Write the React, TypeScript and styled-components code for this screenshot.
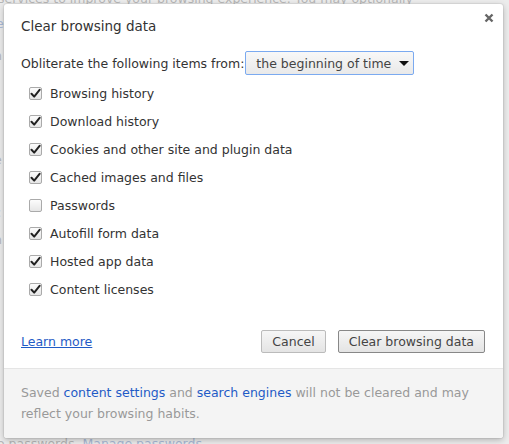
import styled, { createGlobalStyle } from 'styled-components';

const GlobalStyle = createGlobalStyle`
  html, body {
    margin: 0;
    padding: 0;
    width: 509px;
    height: 444px;
    overflow: hidden;
    background: #eaeaea;
    font-family: 'DejaVu Sans', 'Liberation Sans', sans-serif;
  }
`;

const Page = styled.div`
  position: relative;
  width: 509px;
  height: 444px;
  overflow: hidden;
  background: #ececec;
  color: #b5b5b5;
  font-size: 12.5px;
`;

const BackText = styled.div<{ $top: number; $left: number; $link?: boolean }>`
  position: absolute;
  top: ${(p) => p.$top}px;
  left: ${(p) => p.$left}px;
  white-space: nowrap;
  color: ${(p) => (p.$link ? '#a9b9d6' : '#b7b7b7')};
`;

const Dialog = styled.div`
  position: absolute;
  left: 4px;
  top: 4px;
  width: 499px;
  height: 434px;
  background: #fff;
  border-radius: 3px;
  box-shadow: 0 2px 6px rgba(0, 0, 0, 0.25), 0 0 0 1px rgba(0, 0, 0, 0.05);
  display: flex;
  flex-direction: column;
  overflow: hidden;
  color: #333;
`;

const Body = styled.div`
  flex: 1;
  padding: 0 18px 0 17px;
  display: flex;
  flex-direction: column;
`;

const Header = styled.div`
  position: relative;
  height: 42px;
  display: flex;
  align-items: center;
`;

const Title = styled.h1`
  margin: 0;
  font-size: 13.5px;
  font-weight: normal;
  color: #333;
  padding-top: 2px;
`;

const Close = styled.div`
  position: absolute;
  right: -11px;
  top: 7px;
  width: 14px;
  height: 14px;
`;

const FromRow = styled.div`
  display: flex;
  align-items: center;
  gap: 1px;
  font-size: 12.5px;
  height: 24px;
  margin-top: 5px;
  white-space: nowrap;
`;

const Select = styled.div`
  box-sizing: border-box;
  width: 169px;
  height: 24px;
  border: 1px solid #7baaf0;
  border-radius: 2px;
  background: linear-gradient(#f8f8f8, #e9e9e9);
  display: flex;
  align-items: center;
  justify-content: space-between;
  padding: 0 4px 0 10px;
  color: #444;
  font-size: 12.5px;
  white-space: nowrap;
`;

const Arrow = styled.span`
  width: 0;
  height: 0;
  border-left: 5px solid transparent;
  border-right: 5px solid transparent;
  border-top: 5px solid #111;
`;

const List = styled.div`
  display: flex;
  flex-direction: column;
  margin-top: 4px;
  padding-left: 8px;
`;

const Row = styled.label`
  display: flex;
  align-items: center;
  height: 28px;
  gap: 8px;
  font-size: 12.5px;
  color: #333;
`;

const Box = styled.span`
  box-sizing: border-box;
  width: 13px;
  height: 13px;
  border: 1px solid #aaa;
  border-radius: 2px;
  background: linear-gradient(#fcfcfc, #e6e6e6);
  display: flex;
  align-items: center;
  justify-content: center;
`;

const Actions = styled.div`
  display: flex;
  align-items: center;
  margin-top: auto;
  margin-bottom: 15px;
  gap: 12px;
`;

const Link = styled.a`
  color: #1f5bc6;
  font-size: 12.5px;
  text-decoration: underline;
  margin-right: auto;
`;

const Button = styled.button<{ $primary?: boolean }>`
  box-sizing: border-box;
  height: 23px;
  padding: 0 10px;
  border: 1px solid ${(p) => (p.$primary ? '#888' : '#bbb')};
  border-radius: 2px;
  background: linear-gradient(#f6f6f6, #e4e4e4);
  font-family: inherit;
  font-size: 12.5px;
  color: #444;
`;

const Footer = styled.div`
  height: 70px;
  box-sizing: border-box;
  border-top: 1px solid #e5e5e5;
  background: #f4f4f4;
  padding: 13px 17px 0;
  font-size: 12.5px;
  line-height: 21px;
  color: #999;
`;

const FooterLink = styled.a`
  color: #1f5bc6;
  text-decoration: none;
`;

const Check = () => (
  <svg width="11" height="11" viewBox="0 0 11 11">
    <path d="M1.5 5.8 L4.2 8.6 L9.6 1.8" fill="none" stroke="#222" strokeWidth="2" strokeLinecap="round" strokeLinejoin="round" />
  </svg>
);

const items = [
  { label: 'Browsing history', checked: true },
  { label: 'Download history', checked: true },
  { label: 'Cookies and other site and plugin data', checked: true },
  { label: 'Cached images and files', checked: true },
  { label: 'Passwords', checked: false },
  { label: 'Autofill form data', checked: true },
  { label: 'Hosted app data', checked: true },
  { label: 'Content licenses', checked: true },
];

export default function App() {
  return (
    <Page>
      <GlobalStyle />
      <BackText $top={-9} $left={-2}>services to improve your browsing experience. You may optionally</BackText>
      <BackText $top={16} $left={-4} $link>e</BackText>
      <BackText $top={48} $left={-6}>n</BackText>
      <BackText $top={152} $left={-6}>e</BackText>
      <BackText $top={205} $left={-6}>c</BackText>
      <BackText $top={232} $left={-6}>n</BackText>
      <BackText $top={436} $left={-3}>
        o passwords. <span style={{ color: '#a9b9d6' }}>Manage passwords</span>
      </BackText>
      <Dialog>
        <Body>
          <Header>
            <Title>Clear browsing data</Title>
            <Close>
              <svg width="14" height="14" viewBox="0 0 14 14">
                <path d="M3.5 3.5 L10.5 10.5 M10.5 3.5 L3.5 10.5" stroke="#666" strokeWidth="2.4" />
              </svg>
            </Close>
          </Header>
          <FromRow>
            <span>Obliterate the following items from:</span>
            <Select>
              <span>the beginning of time</span>
              <Arrow />
            </Select>
          </FromRow>
          <List>
            {items.map((item) => (
              <Row key={item.label}>
                <Box>{item.checked && <Check />}</Box>
                <span>{item.label}</span>
              </Row>
            ))}
          </List>
          <Actions>
            <Link>Learn more</Link>
            <Button>Cancel</Button>
            <Button $primary>Clear browsing data</Button>
          </Actions>
        </Body>
        <Footer>
          Saved <FooterLink>content settings</FooterLink> and <FooterLink>search engines</FooterLink> will not be cleared and may reflect your browsing habits.
        </Footer>
      </Dialog>
    </Page>
  );
}
